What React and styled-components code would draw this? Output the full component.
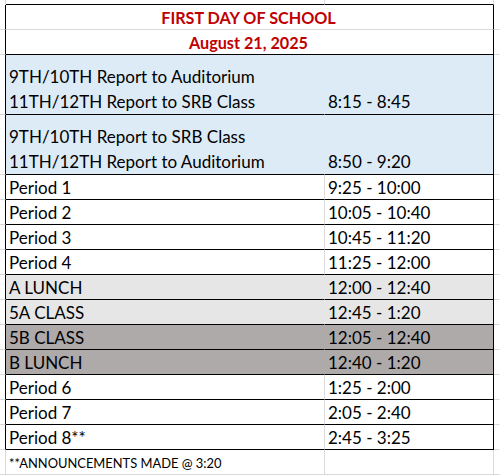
import React from "react";
import styled, { createGlobalStyle } from "styled-components";

const GRID = "#d9d9d9";
const INK = "#000000";
const FILLS = {
  white: "#ffffff",
  blue: "#ddebf7",
  light: "#e7e6e6",
  dark: "#aeaaaa",
};

const GlobalStyle = createGlobalStyle`
  html, body { margin: 0; padding: 0; background: #ffffff; }
  body { font-family: Lato, "Open Sans", sans-serif; }
`;

const Sheet = styled.div`
  width: 500px;
  height: 475px;
  overflow: hidden;
  display: flex;
  flex-direction: column;
`;

const Row = styled.div`
  display: grid;
  grid-template-columns: 6px 319px 169px 6px;
  height: ${(p) => p.$h}px;
  flex: none;
`;

const Stub = styled.div`
  border-right: 1px solid ${(p) => p.$edge || "transparent"};
  border-bottom: 1px solid ${(p) => p.$bottom || "transparent"};
`;

const Cell = styled.div`
  display: flex;
  align-items: flex-end;
  justify-content: ${(p) => (p.$center ? "center" : "flex-start")};
  grid-column: span ${(p) => p.$span || 1};
  background: ${(p) => p.$bg || "#ffffff"};
  border-right: 1px solid ${(p) => p.$right || GRID};
  border-bottom: 1px solid ${(p) => p.$bottom || GRID};
  padding: 0 2px 0 ${(p) => (p.$center ? 0 : 3)}px;
  min-width: 0;
  overflow: hidden;
`;

const Text = styled.div`
  font-size: ${(p) => p.$size || 17}px;
  line-height: ${(p) => p.$lh || 23}px;
  font-weight: ${(p) => (p.$bold ? 700 : 400)};
  color: ${(p) => p.$color || "#000000"};
  white-space: pre;
`;

const Title = styled(Text).attrs({ $bold: true, $color: "#c00000", $size: 16.2 })``;

const rows = [
  { lines: ["9TH/10TH Report to Auditorium", "11TH/12TH Report to SRB Class"], time: "8:15 - 8:45", fill: "blue", h: 60 },
  { lines: ["9TH/10TH Report to SRB Class", "11TH/12TH Report to Auditorium"], time: "8:50 - 9:20", fill: "blue", h: 60 },
  { lines: ["Period 1"], time: "9:25 - 10:00", fill: "white" },
  { lines: ["Period 2"], time: "10:05 - 10:40", fill: "white" },
  { lines: ["Period 3"], time: "10:45 - 11:20", fill: "white" },
  { lines: ["Period 4"], time: "11:25 - 12:00", fill: "white" },
  { lines: ["A LUNCH"], time: "12:00 - 12:40", fill: "light" },
  { lines: ["5A CLASS"], time: "12:45 - 1:20", fill: "light" },
  { lines: ["5B CLASS"], time: "12:05 - 12:40", fill: "dark" },
  { lines: ["B LUNCH"], time: "12:40 - 1:20", fill: "dark" },
  { lines: ["Period 6"], time: "1:25 - 2:00", fill: "white" },
  { lines: ["Period 7"], time: "2:05 - 2:40", fill: "white" },
  { lines: ["Period 8**"], time: "2:45 - 3:25", fill: "white" },
];

export default function App() {
  return (
    <>
      <GlobalStyle />
      <Sheet>
        <Row $h={5}>
          <Stub $edge={GRID} />
          <Cell $bottom={INK} $right={GRID} />
          <Cell $bottom={INK} $right={GRID} />
          <Stub />
        </Row>

        <Row $h={25}>
          <Stub $edge={INK} $bottom={GRID} />
          <Cell $span={2} $center $right={INK} $bottom={GRID}>
            <Title>FIRST DAY OF SCHOOL</Title>
          </Cell>
          <Stub $bottom={GRID} />
        </Row>
        <Row $h={25}>
          <Stub $edge={INK} $bottom={GRID} />
          <Cell $span={2} $center $right={INK} $bottom={INK}>
            <Title>August 21, 2025</Title>
          </Cell>
          <Stub $bottom={GRID} />
        </Row>

        {rows.map((r) => {
          const bg = FILLS[r.fill];
          return (
            <Row key={r.lines.join("|")} $h={r.h || 25}>
              <Stub $edge={INK} $bottom={GRID} />
              <Cell $bg={bg} $right={r.fill === "white" ? GRID : bg} $bottom={INK}>
                <Text $lh={r.h ? 25 : 23}>{r.lines.join("\n")}</Text>
              </Cell>
              <Cell $bg={bg} $right={INK} $bottom={INK}>
                <Text $lh={r.h ? 25 : 23}>{r.time}</Text>
              </Cell>
              <Stub $bottom={GRID} />
            </Row>
          );
        })}

        <Row $h={25}>
          <Stub $edge={GRID} $bottom={GRID} />
          <Cell $right={GRID} $bottom={GRID}>
            <Text $size={12.9} $lh={22}>**ANNOUNCEMENTS MADE @ 3:20</Text>
          </Cell>
          <Cell $right={GRID} $bottom={GRID} />
          <Stub $bottom={GRID} />
        </Row>
      </Sheet>
    </>
  );
}
